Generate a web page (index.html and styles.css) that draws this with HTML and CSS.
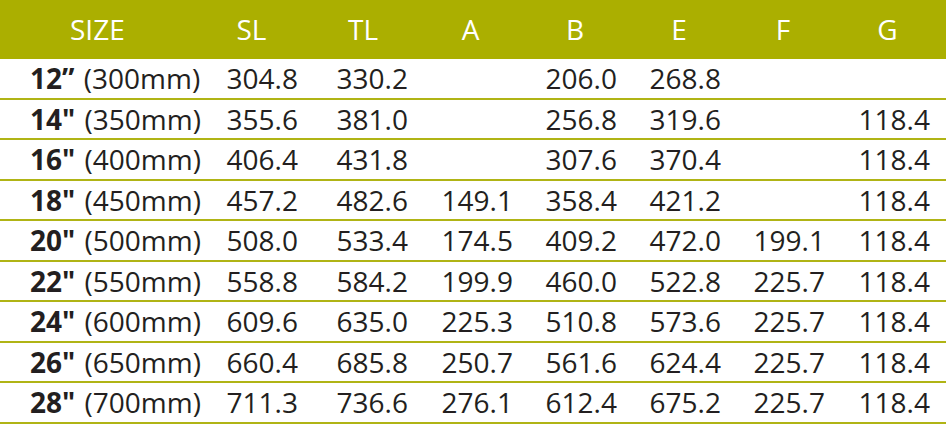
FILE: index.html
```html
<!DOCTYPE html>
<html lang="en">
<head>
<meta charset="utf-8">
<title>Size chart</title>
<link rel="stylesheet" href="styles.css">
</head>
<body>
<div class="chart">
  <div class="row head">
    <div class="hc size">SIZE</div>
    <div class="hc">SL</div>
    <div class="hc">TL</div>
    <div class="hc">A</div>
    <div class="hc">B</div>
    <div class="hc">E</div>
    <div class="hc">F</div>
    <div class="hc">G</div>
    <div></div>
  </div>
  <div class="row"><div class="lab"><b>12”</b> (300mm)</div><div class="c">304.8</div><div class="c">330.2</div><div class="c"></div><div class="c">206.0</div><div class="c">268.8</div><div class="c"></div><div class="c"></div><div></div></div>
  <div class="row"><div class="lab"><b>14"</b> (350mm)</div><div class="c">355.6</div><div class="c">381.0</div><div class="c"></div><div class="c">256.8</div><div class="c">319.6</div><div class="c"></div><div class="c">118.4</div><div></div></div>
  <div class="row"><div class="lab"><b>16"</b> (400mm)</div><div class="c">406.4</div><div class="c">431.8</div><div class="c"></div><div class="c">307.6</div><div class="c">370.4</div><div class="c"></div><div class="c">118.4</div><div></div></div>
  <div class="row"><div class="lab"><b>18"</b> (450mm)</div><div class="c">457.2</div><div class="c">482.6</div><div class="c">149.1</div><div class="c">358.4</div><div class="c">421.2</div><div class="c"></div><div class="c">118.4</div><div></div></div>
  <div class="row"><div class="lab"><b>20"</b> (500mm)</div><div class="c">508.0</div><div class="c">533.4</div><div class="c">174.5</div><div class="c">409.2</div><div class="c">472.0</div><div class="c">199.1</div><div class="c">118.4</div><div></div></div>
  <div class="row"><div class="lab"><b>22"</b> (550mm)</div><div class="c">558.8</div><div class="c">584.2</div><div class="c">199.9</div><div class="c">460.0</div><div class="c">522.8</div><div class="c">225.7</div><div class="c">118.4</div><div></div></div>
  <div class="row"><div class="lab"><b>24"</b> (600mm)</div><div class="c">609.6</div><div class="c">635.0</div><div class="c">225.3</div><div class="c">510.8</div><div class="c">573.6</div><div class="c">225.7</div><div class="c">118.4</div><div></div></div>
  <div class="row"><div class="lab"><b>26"</b> (650mm)</div><div class="c">660.4</div><div class="c">685.8</div><div class="c">250.7</div><div class="c">561.6</div><div class="c">624.4</div><div class="c">225.7</div><div class="c">118.4</div><div></div></div>
  <div class="row"><div class="lab"><b>28"</b> (700mm)</div><div class="c">711.3</div><div class="c">736.6</div><div class="c">276.1</div><div class="c">612.4</div><div class="c">675.2</div><div class="c">225.7</div><div class="c">118.4</div><div></div></div>
</div>
</body>
</html>
```

FILE: styles.css
```css
html, body {
  margin: 0;
  padding: 0;
  background: #ffffff;
}

.chart {
  width: 946px;
  font-family: "Open Sans", "Noto Sans", sans-serif;
  font-size: 28px;
  font-weight: 500;
  color: #231f20;
}

.row {
  display: grid;
  grid-template-columns: 195px 113px 110px 105px 104px 104px 104px 105px 1fr;
  align-items: center;
  box-sizing: border-box;
  height: 40.5px;
  border-bottom: 2px solid #b0b415;
  line-height: 1;
}

.row.head {
  height: 59px;
  background: #abaf00;
  border-bottom: none;
  color: #ffffff;
  font-weight: 400;
}

.hc {
  text-align: center;
  padding-bottom: 2px;
}

.hc.size {
  text-align: left;
  padding-left: 70px;
}

.lab {
  padding-left: 30px;
  white-space: nowrap;
}

.lab b {
  font-weight: 700;
  margin-right: 2px;
}

.c {
  text-align: right;
  padding-right: 10px;
}
```
